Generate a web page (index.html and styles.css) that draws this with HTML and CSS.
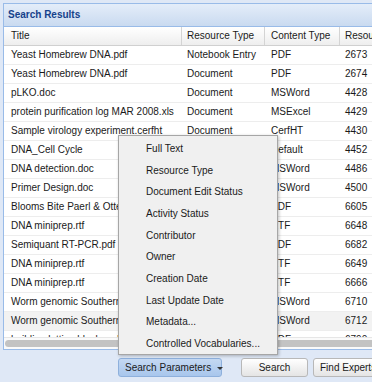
FILE: index.html
```html
<!DOCTYPE html>
<html>
<head>
<meta charset="utf-8">
<link rel="stylesheet" href="styles.css">
</head>
<body>
<div class="page">
  <div class="panel">
    <div class="panel-header">Search Results</div>
    <div class="grid">
      <div class="grid-head">
        <div class="c c1">Title</div>
        <div class="c c2">Resource Type</div>
        <div class="c c3">Content Type</div>
        <div class="c c4">Resource ID</div>
      </div>
      <div class="grid-body">
        <div class="row"><div class="c c1">Yeast Homebrew DNA.pdf</div><div class="c c2">Notebook Entry</div><div class="c c3">PDF</div><div class="c c4">2673</div></div>
        <div class="row"><div class="c c1">Yeast Homebrew DNA.pdf</div><div class="c c2">Document</div><div class="c c3">PDF</div><div class="c c4">2674</div></div>
        <div class="row"><div class="c c1">pLKO.doc</div><div class="c c2">Document</div><div class="c c3">MSWord</div><div class="c c4">4428</div></div>
        <div class="row"><div class="c c1">protein purification log MAR 2008.xls</div><div class="c c2">Document</div><div class="c c3">MSExcel</div><div class="c c4">4429</div></div>
        <div class="row"><div class="c c1">Sample virology experiment.cerfht</div><div class="c c2">Document</div><div class="c c3">CerfHT</div><div class="c c4">4430</div></div>
        <div class="row"><div class="c c1">DNA_Cell Cycle</div><div class="c c2">Notebook Entry</div><div class="c c3">Default</div><div class="c c4">4452</div></div>
        <div class="row"><div class="c c1">DNA detection.doc</div><div class="c c2">Document</div><div class="c c3">MSWord</div><div class="c c4">4486</div></div>
        <div class="row"><div class="c c1">Primer Design.doc</div><div class="c c2">Document</div><div class="c c3">MSWord</div><div class="c c4">4500</div></div>
        <div class="row"><div class="c c1">Blooms Bite Paerl &amp; Otten 2013.pdf</div><div class="c c2">Document</div><div class="c c3">PDF</div><div class="c c4">6605</div></div>
        <div class="row"><div class="c c1">DNA miniprep.rtf</div><div class="c c2">Document</div><div class="c c3">RTF</div><div class="c c4">6648</div></div>
        <div class="row"><div class="c c1">Semiquant RT-PCR.pdf</div><div class="c c2">Document</div><div class="c c3">PDF</div><div class="c c4">6682</div></div>
        <div class="row"><div class="c c1">DNA miniprep.rtf</div><div class="c c2">Document</div><div class="c c3">RTF</div><div class="c c4">6649</div></div>
        <div class="row"><div class="c c1">DNA miniprep.rtf</div><div class="c c2">Document</div><div class="c c3">RTF</div><div class="c c4">6666</div></div>
        <div class="row"><div class="c c1">Worm genomic Southern blot.doc</div><div class="c c2">Document</div><div class="c c3">MSWord</div><div class="c c4">6710</div></div>
        <div class="row alt"><div class="c c1">Worm genomic Southern blot 2.doc</div><div class="c c2">Document</div><div class="c c3">MSWord</div><div class="c c4">6712</div></div>
        <div class="row"><div class="c c1">building lattice blocks.pdf</div><div class="c c2">Document</div><div class="c c3">PDF</div><div class="c c4">6790</div></div>
        <div class="hscroll"><div class="thumb"></div></div>
      </div>
    </div>
  </div>
  <div class="toolbar">
    <div class="btn btn-params">Search Parameters <span class="caret"></span></div>
    <div class="btn btn-search">Search</div>
    <div class="btn btn-experts">Find Experts</div>
  </div>
  <div class="menu">
    <div class="item">Full Text</div>
    <div class="item">Resource Type</div>
    <div class="item">Document Edit Status</div>
    <div class="item">Activity Status</div>
    <div class="item">Contributor</div>
    <div class="item">Owner</div>
    <div class="item">Creation Date</div>
    <div class="item">Last Update Date</div>
    <div class="item">Metadata...</div>
    <div class="item">Controlled Vocabularies...</div>
  </div>
</div>
</body>
</html>
```
FILE: styles.css
```css
html, body {
  margin: 0;
  padding: 0;
}
body {
  background: #dfe8f6;
  font-family: "Liberation Sans", Arial, sans-serif;
  font-size: 10px;
  color: #1a1a1a;
  width: 372px;
  height: 382px;
  overflow: hidden;
}
.page {
  position: relative;
  padding-top: 3px;
  height: 382px;
  box-sizing: border-box;
}
.panel {
  margin-left: 3px;
  width: 430px;
  border: 1px solid #99bbe8;
}
.panel-header {
  height: 22px;
  line-height: 22px;
  padding-left: 4px;
  font-weight: bold;
  font-size: 10px;
  color: #15428b;
  background: linear-gradient(#e4edf9, #c9daf0);
  border-bottom: 1px solid #99bbe8;
}
.grid {
  background: #fff;
}
.grid-head {
  display: flex;
  height: 18px;
  line-height: 18px;
  background: linear-gradient(#ffffff, #eeeeee);
  border-bottom: 1px solid #d0d0d0;
}
.grid-head .c {
  border-right: 1px solid #d4d4d4;
}
.c {
  box-sizing: border-box;
  padding-left: 5px;
  white-space: nowrap;
  overflow: hidden;
  flex: none;
}
.c1 { width: 178px; padding-left: 7px; }
.c2 { width: 83px; padding-left: 5px; }
.c3 { width: 75px; padding-left: 6px; }
.c4 { width: 90px; }
.grid-body {
  position: relative;
  height: 303px;
  overflow: hidden;
}
.row {
  display: flex;
  height: 18px;
  line-height: 18px;
  border-bottom: 1px solid #ededed;
}
.row.alt {
  background: #f2f2f2;
}
.hscroll {
  position: absolute;
  left: 0;
  right: 0;
  bottom: 0;
  height: 11px;
  background: #fafafa;
  border-top: 1px solid #e6e6e6;
}
.thumb {
  margin: 2px 0 0 1px;
  width: 420px;
  height: 7px;
  border-radius: 4px;
  background: #c3c3c3;
}
.toolbar {
  display: flex;
  padding: 8px 0 0 118px;
}
.btn {
  box-sizing: border-box;
  height: 19px;
  line-height: 17px;
  border-radius: 3px;
  flex: none;
  white-space: nowrap;
}
.btn-params {
  width: 104px;
  padding-left: 6px;
  background: linear-gradient(#c4d8f2, #a8c6ec);
  border: 1px solid #8eb0dc;
  color: #1a1a1a;
}
.caret {
  display: inline-block;
  width: 0;
  height: 0;
  margin-left: 3px;
  vertical-align: 1px;
  border-left: 3px solid transparent;
  border-right: 3px solid transparent;
  border-top: 3px solid #333;
}
.btn-search {
  margin-left: 19px;
  width: 67px;
  text-align: center;
  background: linear-gradient(#ffffff, #e4e4e4);
  border: 1px solid #b8b8b8;
}
.btn-experts {
  margin-left: 5px;
  width: 75px;
  padding-left: 6px;
  background: linear-gradient(#ffffff, #e4e4e4);
  border: 1px solid #b8b8b8;
}
.menu {
  position: absolute;
  left: 118px;
  top: 135px;
  width: 160px;
  box-sizing: border-box;
  padding-top: 2px;
  height: 220px;
  background: #f0f0f0;
  border: 1px solid #a6a6a6;
  box-shadow: 1px 1px 3px rgba(0, 0, 0, 0.25);
}
.item {
  height: 21.67px;
  line-height: 21.67px;
  padding-left: 27px;
  white-space: nowrap;
  color: #1a1a1a;
}
```
